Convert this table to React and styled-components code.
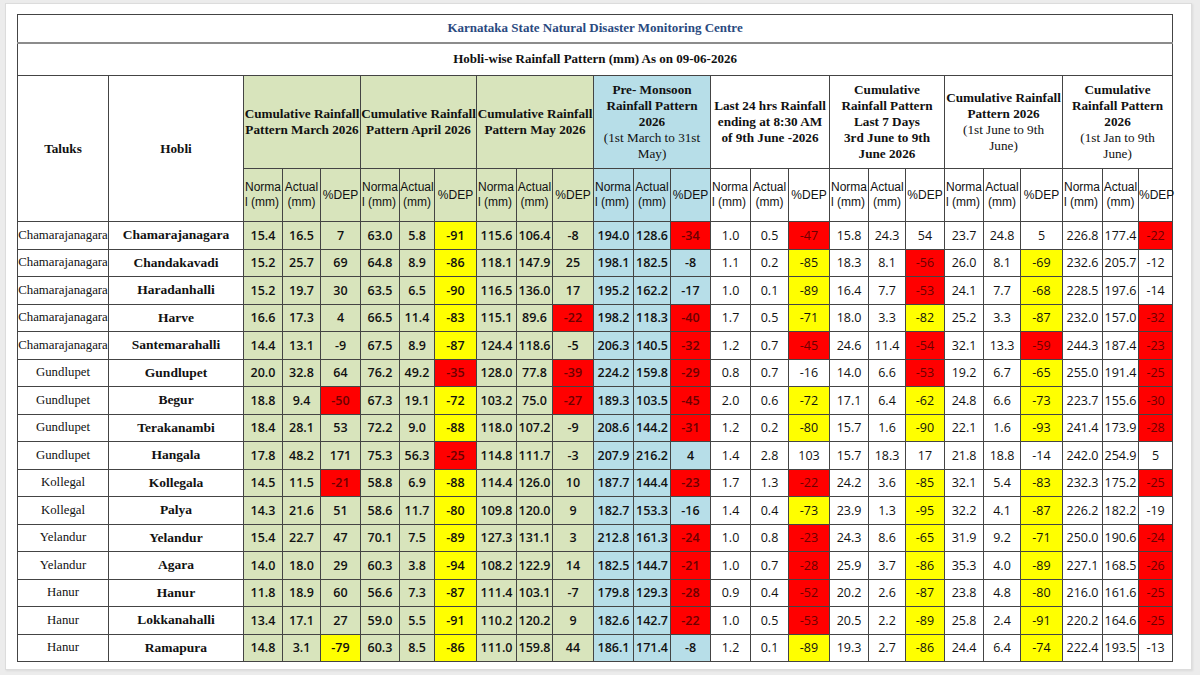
import styled, { createGlobalStyle } from "styled-components";

const GlobalStyle = createGlobalStyle`
  html, body {
    margin: 0;
    padding: 0;
    background: #ececec;
  }
`;

const tones = {
  green: "#d8e4bc",
  blue: "#b7dee8",
  white: "#ffffff",
};

const flags = {
  red: "#ff0000",
  yellow: "#ffff00",
};

const Page = styled.div`
  width: 1200px;
  height: 675px;
  box-sizing: border-box;
  padding: 3px 8px 5px 5px;
`;

const Panel = styled.div`
  height: 100%;
  box-sizing: border-box;
  background: #fff;
  border: 1px solid #dcdcdc;
  box-shadow: 1px 1px 2px rgba(0, 0, 0, 0.08);
  padding: 10px 19px 7px 11px;
`;

const Sheet = styled.table`
  width: 1155px;
  table-layout: fixed;
  border-collapse: collapse;
  border: 1px solid #444;
  color: #111;
`;

const Col = styled.col`
  width: ${(p) => p.$w}px;
`;

const Row = styled.tr`
  height: ${(p) => p.$h}px;
`;

const TitleCell = styled.td`
  border-left: 1px solid #444;
  border-right: 1px solid #444;
  border-bottom: ${(p) => (p.$sub ? "1px solid #444" : "2px solid #8c8c8c")};
  text-align: center;
  font-family: "Liberation Serif", "Times New Roman", serif;
  font-weight: bold;
  font-size: 13px;
  color: ${(p) => (p.$sub ? "#111" : "#2a4a7f")};
  padding: 0;
`;

const KeyHead = styled.th`
  border: 1px solid #444;
  font-family: "Liberation Serif", "Times New Roman", serif;
  font-weight: bold;
  font-size: 13.2px;
  padding: 0;
`;

const GroupHead = styled.th`
  border: 1px solid #444;
  background: ${(p) => tones[p.$tone]};
  font-family: "Liberation Serif", "Times New Roman", serif;
  font-weight: bold;
  font-size: 13.2px;
  line-height: 16px;
  padding: 0;
  text-align: center;
  white-space: nowrap;
`;

const Note = styled.span`
  font-weight: normal;
`;

const SubHead = styled.th`
  border: 1px solid #444;
  background: ${(p) => tones[p.$tone]};
  font-family: "Liberation Sans", Arial, sans-serif;
  font-weight: normal;
  font-size: 12px;
  line-height: 15px;
  padding: 0 0 0 ${(p) => (p.$left ? "1px" : "0")};
  text-align: ${(p) => (p.$left ? "left" : "center")};
  white-space: nowrap;
`;

const NameCell = styled.td`
  border: 1px solid #444;
  font-family: "Liberation Serif", "Times New Roman", serif;
  font-weight: ${(p) => (p.$bold ? "bold" : "normal")};
  font-size: ${(p) => (p.$bold ? "13.5px" : "12.8px")};
  text-align: center;
  white-space: nowrap;
  overflow: visible;
  padding: 0;
`;

const NumCell = styled.td`
  border: 1px solid #444;
  background: ${(p) => (p.$flag ? flags[p.$flag] : tones[p.$tone])};
  color: ${(p) => (p.$flag === "red" ? "#6b0000" : "#111")};
  font-family: "Open Sans", "Liberation Sans", sans-serif;
  font-weight: ${(p) => (p.$tone === "white" ? 400 : 600)};
  font-size: 12.5px;
  text-align: center;
  white-space: nowrap;
  padding: 0;
`;

const widths = [
  91, 135,
  39, 38, 40, 39, 35, 42, 40, 36, 41, 40, 37, 40,
  40, 38, 41, 39, 37, 39, 39, 37, 42, 40, 36, 34,
];

const groups = [
  { tone: "green", title: ["Cumulative Rainfall", "Pattern March 2026"] },
  { tone: "green", title: ["Cumulative Rainfall", "Pattern April 2026"] },
  { tone: "green", title: ["Cumulative Rainfall", "Pattern May 2026"] },
  {
    tone: "blue",
    title: ["Pre- Monsoon", "Rainfall Pattern", "2026"],
    note: ["(1st March to 31st", "May)"],
  },
  {
    tone: "white",
    title: ["Last 24 hrs Rainfall", "ending at 8:30 AM", "of 9th June -2026"],
  },
  {
    tone: "white",
    title: ["Cumulative", "Rainfall Pattern", "Last 7 Days", "3rd June to 9th", "June 2026"],
  },
  {
    tone: "white",
    title: ["Cumulative Rainfall", "Pattern 2026"],
    note: ["(1st June to 9th", "June)"],
  },
  {
    tone: "white",
    title: ["Cumulative", "Rainfall Pattern", "2026"],
    note: ["(1st Jan to 9th", "June)"],
  },
];

const rows = [
  ["Chamarajanagara", "Chamarajanagara", "15.4 16.5 7 63.0 5.8 -91 115.6 106.4 -8 194.0 128.6 -34 1.0 0.5 -47 15.8 24.3 54 23.7 24.8 5 226.8 177.4 -22"],
  ["Chamarajanagara", "Chandakavadi", "15.2 25.7 69 64.8 8.9 -86 118.1 147.9 25 198.1 182.5 -8 1.1 0.2 -85 18.3 8.1 -56 26.0 8.1 -69 232.6 205.7 -12"],
  ["Chamarajanagara", "Haradanhalli", "15.2 19.7 30 63.5 6.5 -90 116.5 136.0 17 195.2 162.2 -17 1.0 0.1 -89 16.4 7.7 -53 24.1 7.7 -68 228.5 197.6 -14"],
  ["Chamarajanagara", "Harve", "16.6 17.3 4 66.5 11.4 -83 115.1 89.6 -22 198.2 118.3 -40 1.7 0.5 -71 18.0 3.3 -82 25.2 3.3 -87 232.0 157.0 -32"],
  ["Chamarajanagara", "Santemarahalli", "14.4 13.1 -9 67.5 8.9 -87 124.4 118.6 -5 206.3 140.5 -32 1.2 0.7 -45 24.6 11.4 -54 32.1 13.3 -59 244.3 187.4 -23"],
  ["Gundlupet", "Gundlupet", "20.0 32.8 64 76.2 49.2 -35 128.0 77.8 -39 224.2 159.8 -29 0.8 0.7 -16 14.0 6.6 -53 19.2 6.7 -65 255.0 191.4 -25"],
  ["Gundlupet", "Begur", "18.8 9.4 -50 67.3 19.1 -72 103.2 75.0 -27 189.3 103.5 -45 2.0 0.6 -72 17.1 6.4 -62 24.8 6.6 -73 223.7 155.6 -30"],
  ["Gundlupet", "Terakanambi", "18.4 28.1 53 72.2 9.0 -88 118.0 107.2 -9 208.6 144.2 -31 1.2 0.2 -80 15.7 1.6 -90 22.1 1.6 -93 241.4 173.9 -28"],
  ["Gundlupet", "Hangala", "17.8 48.2 171 75.3 56.3 -25 114.8 111.7 -3 207.9 216.2 4 1.4 2.8 103 15.7 18.3 17 21.8 18.8 -14 242.0 254.9 5"],
  ["Kollegal", "Kollegala", "14.5 11.5 -21 58.8 6.9 -88 114.4 126.0 10 187.7 144.4 -23 1.7 1.3 -22 24.2 3.6 -85 32.1 5.4 -83 232.3 175.2 -25"],
  ["Kollegal", "Palya", "14.3 21.6 51 58.6 11.7 -80 109.8 120.0 9 182.7 153.3 -16 1.4 0.4 -73 23.9 1.3 -95 32.2 4.1 -87 226.2 182.2 -19"],
  ["Yelandur", "Yelandur", "15.4 22.7 47 70.1 7.5 -89 127.3 131.1 3 212.8 161.3 -24 1.0 0.8 -23 24.3 8.6 -65 31.9 9.2 -71 250.0 190.6 -24"],
  ["Yelandur", "Agara", "14.0 18.0 29 60.3 3.8 -94 108.2 122.9 14 182.5 144.7 -21 1.0 0.7 -28 25.9 3.7 -86 35.3 4.0 -89 227.1 168.5 -26"],
  ["Hanur", "Hanur", "11.8 18.9 60 56.6 7.3 -87 111.4 103.1 -7 179.8 129.3 -28 0.9 0.4 -52 20.2 2.6 -87 23.8 4.8 -80 216.0 161.6 -25"],
  ["Hanur", "Lokkanahalli", "13.4 17.1 27 59.0 5.5 -91 110.2 120.2 9 182.6 142.7 -22 1.0 0.5 -53 20.5 2.2 -89 25.8 2.4 -91 220.2 164.6 -25"],
  ["Hanur", "Ramapura", "14.8 3.1 -79 60.3 8.5 -86 111.0 159.8 44 186.1 171.4 -8 1.2 0.1 -89 19.3 2.7 -86 24.4 6.4 -74 222.4 193.5 -13"],
];

// departure colouring: -20..-59 red, -60 and below yellow
function flagFor(dep) {
  const v = Number(dep);
  if (v <= -60) return "yellow";
  if (v <= -20) return "red";
  return null;
}

function joinLines(items) {
  return items.flatMap((t, i) => (i > 0 ? [<br key={`b${i}`} />, t] : [t]));
}

function App() {
  return (
    <Page>
      <GlobalStyle />
      <Panel>
        <Sheet>
          <colgroup>
            {widths.map((w, i) => (
              <Col key={i} $w={w} />
            ))}
          </colgroup>
          <tbody>
            <Row $h={28}>
              <TitleCell colSpan={26}>Karnataka State Natural Disaster Monitoring Centre</TitleCell>
            </Row>
            <Row $h={33}>
              <TitleCell $sub colSpan={26}>
                Hobli-wise Rainfall Pattern (mm) As on 09-06-2026
              </TitleCell>
            </Row>
            <Row $h={93}>
              <KeyHead rowSpan={2}>Taluks</KeyHead>
              <KeyHead rowSpan={2}>Hobli</KeyHead>
              {groups.map((g, i) => (
                <GroupHead key={i} colSpan={3} $tone={g.tone}>
                  {joinLines(g.title)}
                  {g.note && (
                    <Note>
                      <br />
                      {joinLines(g.note)}
                    </Note>
                  )}
                </GroupHead>
              ))}
            </Row>
            <Row $h={53}>
              {groups.map((g, i) => [
                <SubHead key={`n${i}`} $tone={g.tone} $left>
                  Norma
                  <br />l (mm)
                </SubHead>,
                <SubHead key={`a${i}`} $tone={g.tone}>
                  Actual
                  <br />
                  (mm)
                </SubHead>,
                <SubHead key={`d${i}`} $tone={g.tone}>
                  %DEP
                </SubHead>,
              ])}
            </Row>
            {rows.map(([taluk, hobli, nums]) => {
              const vals = nums.split(" ");
              return (
                <Row key={hobli + taluk} $h={27.5}>
                  <NameCell>{taluk}</NameCell>
                  <NameCell $bold>{hobli}</NameCell>
                  {vals.map((v, i) => {
                    const tone = groups[Math.floor(i / 3)].tone;
                    const flag = i % 3 === 2 ? flagFor(v) : null;
                    return (
                      <NumCell key={i} $tone={tone} $flag={flag}>
                        {v}
                      </NumCell>
                    );
                  })}
                </Row>
              );
            })}
          </tbody>
        </Sheet>
      </Panel>
    </Page>
  );
}

export default App;
